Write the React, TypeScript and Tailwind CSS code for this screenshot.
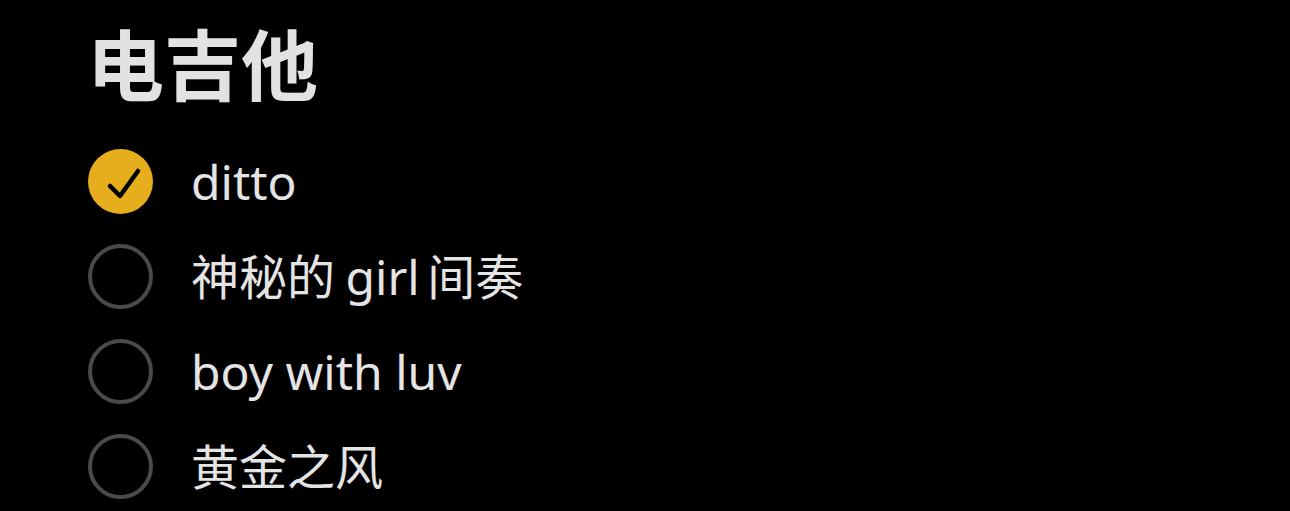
const items = [
  { key: "ditto", checked: true, label: <>ditto</> },
  {
    key: "girl",
    checked: false,
    label: (
      <>
        神秘的<span className="ml-[0.22em] mr-[0.16em]">girl</span>间奏
      </>
    ),
  },
  { key: "luv", checked: false, label: <>boy with luv</> },
  { key: "wind", checked: false, label: <>黄金之风</> },
];

function Radio({ checked }: { checked: boolean }) {
  if (checked) {
    return (
      <div className="flex h-[65px] w-[65px] shrink-0 items-center justify-center rounded-full bg-[#e6ad1c]">
        <svg width="65" height="65" viewBox="0 0 65 65" fill="none">
          <path
            d="M22 37 L32 47 L50 22"
            stroke="#000"
            strokeWidth="4.5"
            strokeLinecap="round"
            strokeLinejoin="round"
          />
        </svg>
      </div>
    );
  }
  return <div className="h-[65px] w-[65px] shrink-0 rounded-full border-[4px] border-[#4a4a4c]" />;
}

export default function App() {
  return (
    <div
      className="h-[511px] w-[1290px] overflow-hidden bg-black pl-[87px] pt-[20px] text-[#e4e4e4]"
      style={{ fontFamily: '"Noto Sans", "Noto Sans CJK SC", sans-serif' }}
    >
      <h1 className="text-[77px] font-bold leading-[92px] text-[#e2e2e2]">电吉他</h1>
      <ul className="ml-[1px] mt-[37px] flex flex-col gap-[30px]">
        {items.map((item) => (
          <li key={item.key} className="flex h-[65px] items-center gap-[38px]">
            <Radio checked={item.checked} />
            <span className="text-[48px] leading-none">{item.label}</span>
          </li>
        ))}
      </ul>
    </div>
  );
}
